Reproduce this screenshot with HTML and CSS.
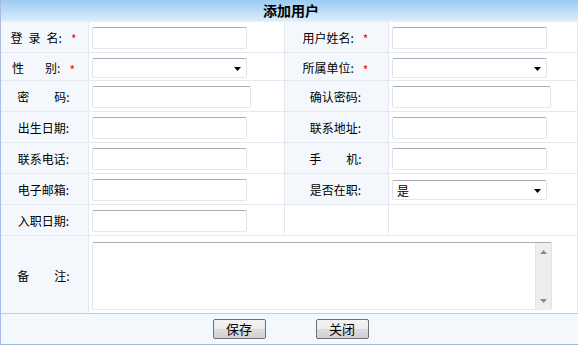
FILE: index.html
```html
<!DOCTYPE html>
<html lang="zh-CN">
<head>
<meta charset="utf-8">
<title>添加用户</title>
<link rel="stylesheet" href="styles.css">
</head>
<body>
<div class="form">
  <div class="title">添加用户</div>
  <div class="grid">
    <div class="lbl">登<span class="sp"></span>录<span class="sp"></span>名:<span class="req">*</span></div>
    <div class="fld"><input class="txt" type="text"></div>
    <div class="lbl">用户姓名:<span class="req">*</span></div>
    <div class="fld"><input class="txt" type="text"></div>

    <div class="lbl">性<span class="sp-md"></span>别:<span class="req">*</span></div>
    <div class="fld"><span class="sel"><select><option></option></select><svg class="arrow" width="7" height="4" viewBox="0 0 7 4"><path d="M0 0H7L3.5 4Z" fill="#000"/></svg></span></div>
    <div class="lbl">所属单位:<span class="req">*</span></div>
    <div class="fld"><span class="sel"><select><option></option></select><svg class="arrow" width="7" height="4" viewBox="0 0 7 4"><path d="M0 0H7L3.5 4Z" fill="#000"/></svg></span></div>

    <div class="lbl">密<span class="sp-lg"></span>码:</div>
    <div class="fld"><input class="txt pwd" type="password"></div>
    <div class="lbl">确认密码:</div>
    <div class="fld"><input class="txt pwd2" type="password"></div>

    <div class="lbl">出生日期:</div>
    <div class="fld"><input class="txt" type="text"></div>
    <div class="lbl">联系地址:</div>
    <div class="fld"><input class="txt" type="text"></div>

    <div class="lbl">联系电话:</div>
    <div class="fld"><input class="txt" type="text"></div>
    <div class="lbl">手<span class="sp-lg"></span>机:</div>
    <div class="fld"><input class="txt" type="text"></div>

    <div class="lbl">电子邮箱:</div>
    <div class="fld"><input class="txt" type="text"></div>
    <div class="lbl">是否在职:</div>
    <div class="fld"><span class="sel"><select><option>是</option><option>否</option></select><svg class="arrow" width="7" height="4" viewBox="0 0 7 4"><path d="M0 0H7L3.5 4Z" fill="#000"/></svg></span></div>

    <div class="lbl">入职日期:</div>
    <div class="fld"><input class="txt" type="text"></div>
    <div class="fld blank"></div>
    <div class="fld"></div>

    <div class="lbl last">备<span class="sp-lg"></span>注:</div>
    <div class="fld wide last">
      <div class="memo">
        <textarea></textarea>
        <div class="scroll">
          <svg width="7" height="4" viewBox="0 0 7 4"><path d="M3.5 0L7 4H0Z" fill="#8a8a8a"/></svg>
          <svg width="7" height="4" viewBox="0 0 7 4"><path d="M0 0H7L3.5 4Z" fill="#8a8a8a"/></svg>
        </div>
      </div>
    </div>
  </div>
  <div class="footer">
    <button class="btn" type="button">保存</button>
    <button class="btn" type="button">关闭</button>
  </div>
</div>
</body>
</html>
```

FILE: styles.css
```css
* { box-sizing: border-box; }
html, body { margin: 0; padding: 0; background: #fff; }
body {
  font-family: "Noto Sans CJK SC", "Liberation Sans", sans-serif;
  font-size: 12px;
  color: #000;
}
.form {
  width: 578px;
  border-left: 1px solid #a9bbe2;
}
.title {
  height: 22px;
  background: linear-gradient(#9ccbf1, #dbedfb);
  border-bottom: 1px solid #e8f1fa;
  text-align: center;
  font-weight: bold;
  font-size: 14px;
  line-height: 21px;
  padding-left: 3px;
}
.grid {
  display: grid;
  grid-template-columns: 88px 196px 104px 189px;
  grid-template-rows: 31px 28px 31px 31px 31px 31px 31px 77px;
}
.lbl, .fld {
  border-right: 1px solid #e3e9ef;
  border-bottom: 1px solid #e3e9ef;
  display: flex;
  align-items: center;
  padding-top: 2px;
}
.lbl {
  background: #f4f8fd;
  justify-content: center;
  line-height: 14px;
  white-space: nowrap;
  padding-right: 2px;
}
.fld { padding-left: 3px; background: #fff; }
.last { border-bottom: none; }
.wide { grid-column: 2 / 5; }
.sp { display: inline-block; width: 6px; }
.sp-md { display: inline-block; width: 21px; }
.sp-lg { display: inline-block; width: 25px; }
.req {
  color: #f00;
  font-size: 12px;
  margin-left: 9px;
  align-self: flex-start;
  line-height: 12px;
  margin-top: 9px;
}
.txt {
  width: 155px;
  height: 22px;
  border: 1px solid #e2e3ea;
  border-top-color: #abadb3;
  border-bottom-color: #e3e9ef;
  border-radius: 2px;
  padding: 0 4px;
  font: inherit;
  background: #fff;
  outline: none;
}
.pwd { width: 159px; }
.pwd2 { width: 159px; }
.sel {
  position: relative;
  display: inline-block;
  width: 155px;
  height: 20px;
}
.sel select {
  -webkit-appearance: none;
  appearance: none;
  width: 100%;
  height: 20px;
  border: 1px solid #e2e3ea;
  border-top-color: #abadb3;
  border-bottom-color: #e3e9ef;
  border-radius: 2px;
  background: #fff;
  font: inherit;
  color: #000;
  padding: 0 4px;
  outline: none;
}
.sel .arrow {
  position: absolute;
  right: 6px;
  top: 9px;
}
.memo {
  width: 460px;
  height: 68px;
  display: flex;
  border: 1px solid #e2e3ea;
  border-top-color: #abadb3;
  border-bottom-color: #e3e9ef;
  border-radius: 2px;
  margin-top: 1px;
}
.memo textarea {
  flex: 1;
  border: none;
  resize: none;
  outline: none;
  font: inherit;
  background: #fff;
}
.scroll {
  width: 16px;
  background: #eeeeee;
  border-left: 1px solid #e4e4e4;
  display: flex;
  flex-direction: column;
  justify-content: space-between;
  align-items: center;
  padding: 7px 0 6px;
}
.scroll svg { display: block; }
.footer {
  height: 32px;
  background: #f3f8fd;
  border-top: 1px solid #b1d1f0;
  border-bottom: 1px solid #a3b3dc;
  display: flex;
  justify-content: center;
  align-items: center;
  gap: 50px;
  padding-left: 2px;
}
.btn {
  width: 53px;
  height: 20px;
  border: 1px solid #707070;
  border-radius: 2px;
  background: linear-gradient(#f4f4f4 0%, #ececec 50%, #dcdcdc 51%, #d2d2d2 100%);
  font: inherit;
  font-size: 13px;
  line-height: 16px;
  color: #000;
  padding: 0;
}
```
